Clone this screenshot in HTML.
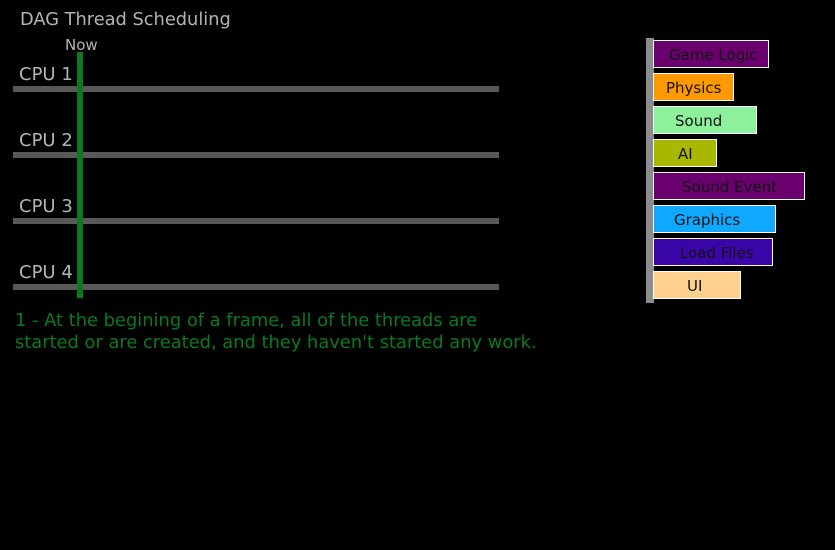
<!DOCTYPE html>
<html><head><style>
body{margin:0;width:835px;height:550px;background:#000;position:relative;overflow:hidden;font-family:"DejaVu Sans","Liberation Sans",sans-serif}
.a{position:absolute;white-space:nowrap}
.t{color:#b4b4b4;font-size:18px;line-height:18px}
.ln{position:absolute;left:13px;width:486px;height:6px;background:#585858}
.b{position:absolute;left:653px;height:28px;border:1px solid #fff;box-sizing:border-box;font-size:15px;line-height:29px;color:#111}
</style></head><body>
<div class="a t" style="left:20px;top:11px;font-size:17.8px">DAG Thread Scheduling</div>
<div class="a" style="left:65px;top:37px;font-size:15px;color:#b4b4b4;line-height:16px">Now</div>
<div class="a t" style="left:19px;top:66px">CPU 1</div>
<div class="a t" style="left:19px;top:132px">CPU 2</div>
<div class="a t" style="left:19px;top:198px">CPU 3</div>
<div class="a t" style="left:19px;top:264px">CPU 4</div>
<div class="ln" style="top:86px"></div>
<div class="ln" style="top:152px"></div>
<div class="ln" style="top:218px"></div>
<div class="ln" style="top:284px"></div>
<div class="a" style="left:77px;top:52px;width:6px;height:246px;background:#0a7a1e"></div>
<div class="a" style="left:15px;top:310px;color:#0a7a1e;font-size:17.85px;line-height:22px">1 - At the begining of a frame, all of the threads are<br>started or are created, and they haven't started any work.</div>
<div class="a" style="left:646px;top:38px;width:8px;height:265px;background:#8c8c8c"></div>
<div class="b" style="top:40px;width:116px;background:#6a006e;padding-left:15px">Game Logic</div>
<div class="b" style="top:73px;width:81px;background:#ff9900;padding-left:12px">Physics</div>
<div class="b" style="top:106px;width:104px;background:#8ef09a;padding-left:21px">Sound</div>
<div class="b" style="top:139px;width:64px;background:#a8b800;padding-left:24px">AI</div>
<div class="b" style="top:172px;width:152px;background:#6a006e;padding-left:28px">Sound Event</div>
<div class="b" style="top:205px;width:123px;background:#10a8ff;padding-left:20px">Graphics</div>
<div class="b" style="top:238px;width:120px;background:#3a06a8;padding-left:26px">Load Files</div>
<div class="b" style="top:271px;width:88px;background:#ffd08e;padding-left:33px">UI</div>
</body></html>
